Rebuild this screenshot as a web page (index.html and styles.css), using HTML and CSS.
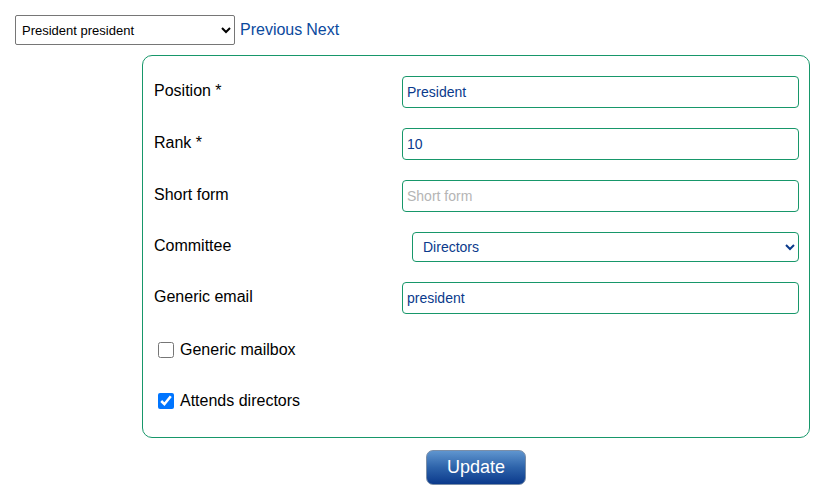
FILE: index.html
```html
<!DOCTYPE html>
<html>
<head>
<meta charset="utf-8">
<link rel="stylesheet" href="styles.css">
</head>
<body>
<div class="page">
  <div class="topbar">
    <select class="picker">
      <option>President president</option>
    </select>
    <a class="navlink" href="#">Previous</a>
    <a class="navlink" href="#">Next</a>
  </div>
  <form class="card">
    <div class="row">
      <label class="lbl">Position *</label>
      <input class="field" type="text" value="President">
    </div>
    <div class="row">
      <label class="lbl">Rank *</label>
      <input class="field" type="text" value="10">
    </div>
    <div class="row">
      <label class="lbl">Short form</label>
      <input class="field" type="text" placeholder="Short form">
    </div>
    <div class="row">
      <label class="lbl">Committee</label>
      <select class="field sel">
        <option>Directors</option>
      </select>
    </div>
    <div class="row">
      <label class="lbl">Generic email</label>
      <input class="field" type="text" value="president">
    </div>
    <div class="check-row">
      <input class="cb" type="checkbox" id="c1">
      <label for="c1">Generic mailbox</label>
    </div>
    <div class="check-row">
      <input class="cb" type="checkbox" id="c2" checked>
      <label for="c2">Attends directors</label>
    </div>
  </form>
  <div class="actions">
    <button class="update" type="button">Update</button>
  </div>
</div>
</body>
</html>
```

FILE: styles.css
```css
html, body {
  margin: 0;
  padding: 0;
  background: #fff;
  font-family: "Liberation Sans", Arial, sans-serif;
}

.page {
  padding: 15px 0 0 15px;
}

.topbar {
  display: flex;
  align-items: center;
  gap: 5px;
  height: 30px;
}

.picker {
  width: 220px;
  height: 30px;
  font-family: "Liberation Sans", Arial, sans-serif;
  font-size: 13px;
  color: #000;
  border: 1px solid #767676;
  border-radius: 2px;
  padding: 0 2px;
  background: #fff;
}

.navlink {
  font-size: 16px;
  color: #0b4a9e;
  text-decoration: none;
}

.topbar .navlink + .navlink {
  margin-left: -1px;
}

.card {
  margin: 10px 0 0 127px;
  width: 668px;
  box-sizing: border-box;
  border: 1px solid #17976a;
  border-radius: 10px;
  padding: 20px 10px 21px 11px;
  display: flex;
  flex-direction: column;
  gap: 20px;
}

.row {
  display: grid;
  grid-template-columns: 248px 1fr;
  align-items: center;
}

.lbl {
  font-size: 16px;
  color: #000;
  margin-top: -3px;
}

.field {
  box-sizing: border-box;
  height: 32px;
  width: 397px;
  border: 1px solid #17976a;
  border-radius: 4px;
  padding: 0 4px;
  font-family: "Liberation Sans", Arial, sans-serif;
  font-size: 14px;
  color: #0a3a8c;
  background: #fff;
  outline: none;
}

.field::placeholder {
  color: #b5b5b5;
}

.sel {
  height: 30px;
  width: 387px;
  margin-left: 10px;
  padding: 0 6px;
}

.check-row {
  display: flex;
  align-items: center;
  height: 31px;
  font-size: 16px;
  color: #000;
}

.cb {
  width: 16px;
  height: 16px;
  margin: 0 6px 0 4px;
  accent-color: #0075ff;
}

.actions {
  width: 668px;
  margin: 12px 0 0 127px;
  display: flex;
  justify-content: center;
}

.update {
  width: 100px;
  height: 35px;
  border: 1px solid #7a8ea8;
  border-radius: 7px;
  background: linear-gradient(to bottom, #5f95cf 0%, #2d63aa 50%, #0b3a8c 100%);
  color: #fff;
  font-family: "Liberation Sans", Arial, sans-serif;
  font-size: 18px;
  padding: 0;
}
```
